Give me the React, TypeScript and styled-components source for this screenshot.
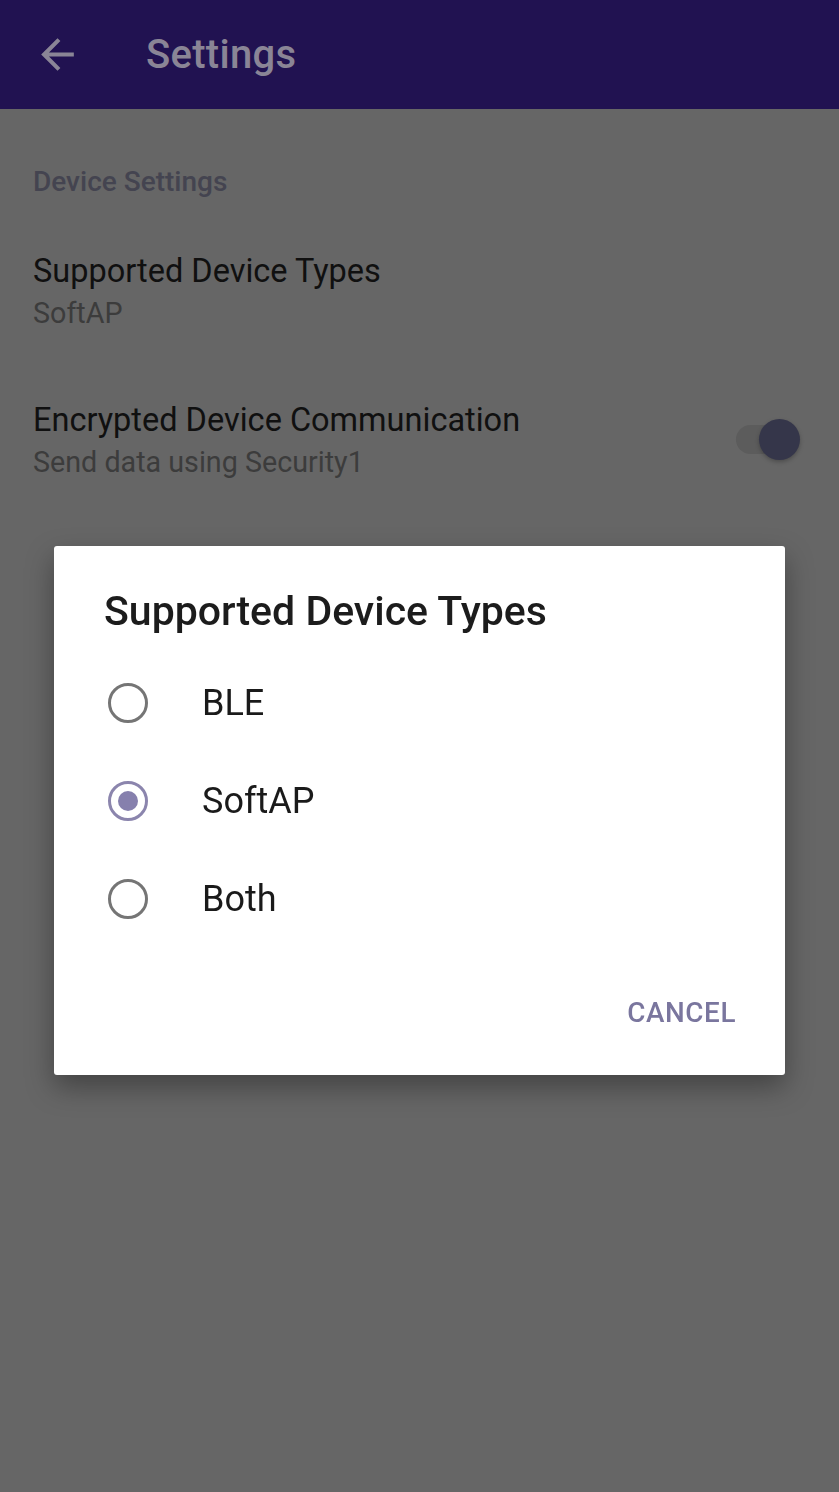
import React from "react";
import styled, { createGlobalStyle } from "styled-components";

const GlobalStyle = createGlobalStyle`
  html, body {
    margin: 0;
    padding: 0;
    background: #666666;
    font-family: Roboto, "Noto Sans", "Liberation Sans", sans-serif;
  }
`;

const StyledPage = styled.div`
  display: flex;
  flex-direction: column;
  min-height: 1492px;
  background: #666666;
`;

const StyledHeader = styled.header`
  display: flex;
  align-items: center;
  gap: 64px;
  height: 109px;
  padding: 0 0 0 33px;
  background: #211251;
  box-sizing: border-box;
`;

const StyledTitle = styled.h1`
  margin: 0;
  font-size: 40px;
  font-weight: 500;
  color: #8a8596;
  letter-spacing: 0.3px;
`;

const StyledContent = styled.div`
  display: flex;
  flex-direction: column;
  padding: 0 33px;
`;

const StyledSectionTitle = styled.div`
  padding-top: 56px;
  padding-bottom: 54px;
  font-size: 28px;
  font-weight: 500;
  color: #444450;
`;

const StyledSettingRow = styled.div`
  display: flex;
  align-items: center;
  justify-content: space-between;
  padding-bottom: 69px;
`;

const StyledInfoBlock = styled.div`
  display: flex;
  flex-direction: column;
  gap: 4px;
`;

const StyledPrimary = styled.div`
  font-size: 32.5px;
  line-height: 38px;
  color: #101010;
`;

const StyledSecondary = styled.div`
  font-size: 28.7px;
  line-height: 38px;
  color: #3c3c3c;
`;

const StyledSwitch = styled.div`
  position: relative;
  width: 56px;
  height: 29px;
  margin-right: 14px;
  margin-bottom: 4px;
  border-radius: 15px;
  background: #5c5c5c;
`;

const StyledThumb = styled.div`
  position: absolute;
  right: -8px;
  top: -6px;
  width: 41px;
  height: 41px;
  border-radius: 50%;
  background: #35364a;
  box-shadow: 0 2px 4px rgba(0, 0, 0, 0.25);
`;

const StyledOverlay = styled.div`
  position: fixed;
  inset: 0;
  display: flex;
  justify-content: center;
  align-items: flex-start;
  padding-top: 546px;
`;

const StyledDialog = styled.div`
  display: flex;
  flex-direction: column;
  width: 731px;
  height: 529px;
  background: #ffffff;
  border-radius: 3px;
  box-shadow: 0 12px 28px rgba(0, 0, 0, 0.35);
  box-sizing: border-box;
`;

const StyledDialogTitle = styled.h2`
  margin: 0;
  padding: 40px 50px 18px;
  font-size: 41px;
  line-height: 50px;
  font-weight: 500;
  color: #1c1c1c;
`;

const StyledOptionList = styled.div`
  display: flex;
  flex-direction: column;
`;

const StyledOption = styled.div`
  display: flex;
  align-items: center;
  gap: 54px;
  height: 98px;
  padding-left: 54px;
`;

const StyledRadio = styled.div<{ $checked: boolean }>`
  display: flex;
  align-items: center;
  justify-content: center;
  width: 40px;
  height: 40px;
  border-radius: 50%;
  border: 3.5px solid ${(p) => (p.$checked ? "#8b85ad" : "#757575")};
  box-sizing: border-box;

  &::after {
    content: "";
    display: ${(p) => (p.$checked ? "block" : "none")};
    width: 20px;
    height: 20px;
    border-radius: 50%;
    background: #8680ad;
  }
`;

const StyledOptionLabel = styled.span`
  font-size: 36px;
  color: #1a1a1a;
`;

const StyledActions = styled.div`
  display: flex;
  justify-content: flex-end;
  margin-top: auto;
  padding: 0 49px 46px;
`;

const StyledCancel = styled.button`
  border: none;
  background: none;
  padding: 0;
  font-family: inherit;
  font-size: 27.8px;
  font-weight: 500;
  letter-spacing: 0.6px;
  color: #7a769e;
`;

const options = ["BLE", "SoftAP", "Both"];

function BackArrow() {
  return (
    <svg width="49" height="49" viewBox="0 0 24 24" fill="#8a8596">
      <path d="M20 11H7.83l5.59-5.59L12 4l-8 8 8 8 1.41-1.41L7.83 13H20v-2z" />
    </svg>
  );
}

function App() {
  const selected = "SoftAP";

  return (
    <>
      <GlobalStyle />
      <StyledPage>
        <StyledHeader>
          <BackArrow />
          <StyledTitle>Settings</StyledTitle>
        </StyledHeader>
        <StyledContent>
          <StyledSectionTitle>Device Settings</StyledSectionTitle>
          <StyledSettingRow>
            <StyledInfoBlock>
              <StyledPrimary>Supported Device Types</StyledPrimary>
              <StyledSecondary>SoftAP</StyledSecondary>
            </StyledInfoBlock>
          </StyledSettingRow>
          <StyledSettingRow>
            <StyledInfoBlock>
              <StyledPrimary>Encrypted Device Communication</StyledPrimary>
              <StyledSecondary>Send data using Security1</StyledSecondary>
            </StyledInfoBlock>
            <StyledSwitch>
              <StyledThumb />
            </StyledSwitch>
          </StyledSettingRow>
        </StyledContent>
      </StyledPage>
      <StyledOverlay>
        <StyledDialog>
          <StyledDialogTitle>Supported Device Types</StyledDialogTitle>
          <StyledOptionList>
            {options.map((option) => (
              <StyledOption key={option}>
                <StyledRadio $checked={option === selected} />
                <StyledOptionLabel>{option}</StyledOptionLabel>
              </StyledOption>
            ))}
          </StyledOptionList>
          <StyledActions>
            <StyledCancel>CANCEL</StyledCancel>
          </StyledActions>
        </StyledDialog>
      </StyledOverlay>
    </>
  );
}

export default App;
